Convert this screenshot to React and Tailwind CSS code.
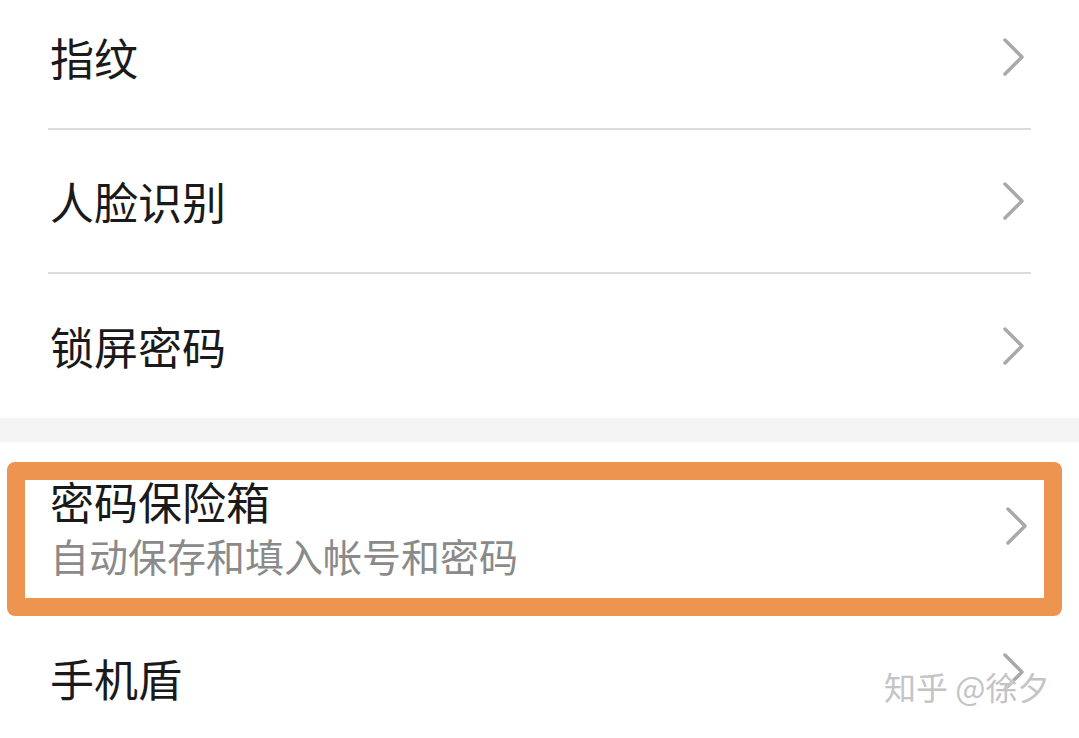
import React from "react";

const font = { fontFamily: '"Noto Sans CJK SC", "Noto Sans", sans-serif' };

function Chevron() {
  return (
    <svg width="24" height="40" viewBox="0 0 24 40" fill="none" className="shrink-0">
      <polyline points="3,3 20,20 3,37" stroke="#a9a9a9" strokeWidth="3.5" strokeLinecap="round" strokeLinejoin="round" />
    </svg>
  );
}

function Row({ title, divider = true }) {
  return (
    <div className={`ml-[48px] mr-[48px] flex h-[144px] items-center justify-between ${divider ? "border-b-2 border-[#dcdcdc]" : ""}`}>
      <span className="pl-[2px] text-[44px] leading-none text-[#1a1a1a]">{title}</span>
      <span className="pr-[5px]">
        <Chevron />
      </span>
    </div>
  );
}

export default function App() {
  return (
    <div className="relative h-[738px] w-[1079px] overflow-hidden bg-white" style={font}>
      <div className="-mt-[14px]">
        <Row title="指纹" />
        <Row title="人脸识别" />
        <Row title="锁屏密码" divider={false} />
      </div>

      <div className="h-[24px] bg-[#f4f4f4]" />

      <div className="ml-[7px] mr-[17px] mt-[20px] rounded-[8px] border-[18px] border-[#ee9451] bg-white">
        <div className="flex h-[118px] items-center justify-between pl-[25px] pr-[15px]">
          <div className="flex flex-col">
            <span className="-mt-[24px] text-[44px] leading-[1.2] text-[#1a1a1a]">密码保险箱</span>
            <span className="mt-[4px] text-[39px] leading-[1.2] text-[#8a8a8a]">自动保存和填入帐号和密码</span>
          </div>
          <span className="-mt-[26px]">
            <Chevron />
          </span>
        </div>
      </div>

      <div className="ml-[48px] mr-[48px] -mt-[4px] flex h-[144px] items-center justify-between">
        <span className="pl-[2px] -mt-[12px] text-[44px] leading-none text-[#1a1a1a]">手机盾</span>
        <span className="-mt-[24px] pr-[5px]">
          <Chevron />
        </span>
      </div>

      <div className="absolute left-[884px] top-[670px] text-[32px] leading-none text-[#c4c4c4] [text-shadow:0_0_2px_#ffffff]">
        知乎 @徐夕
      </div>
    </div>
  );
}
